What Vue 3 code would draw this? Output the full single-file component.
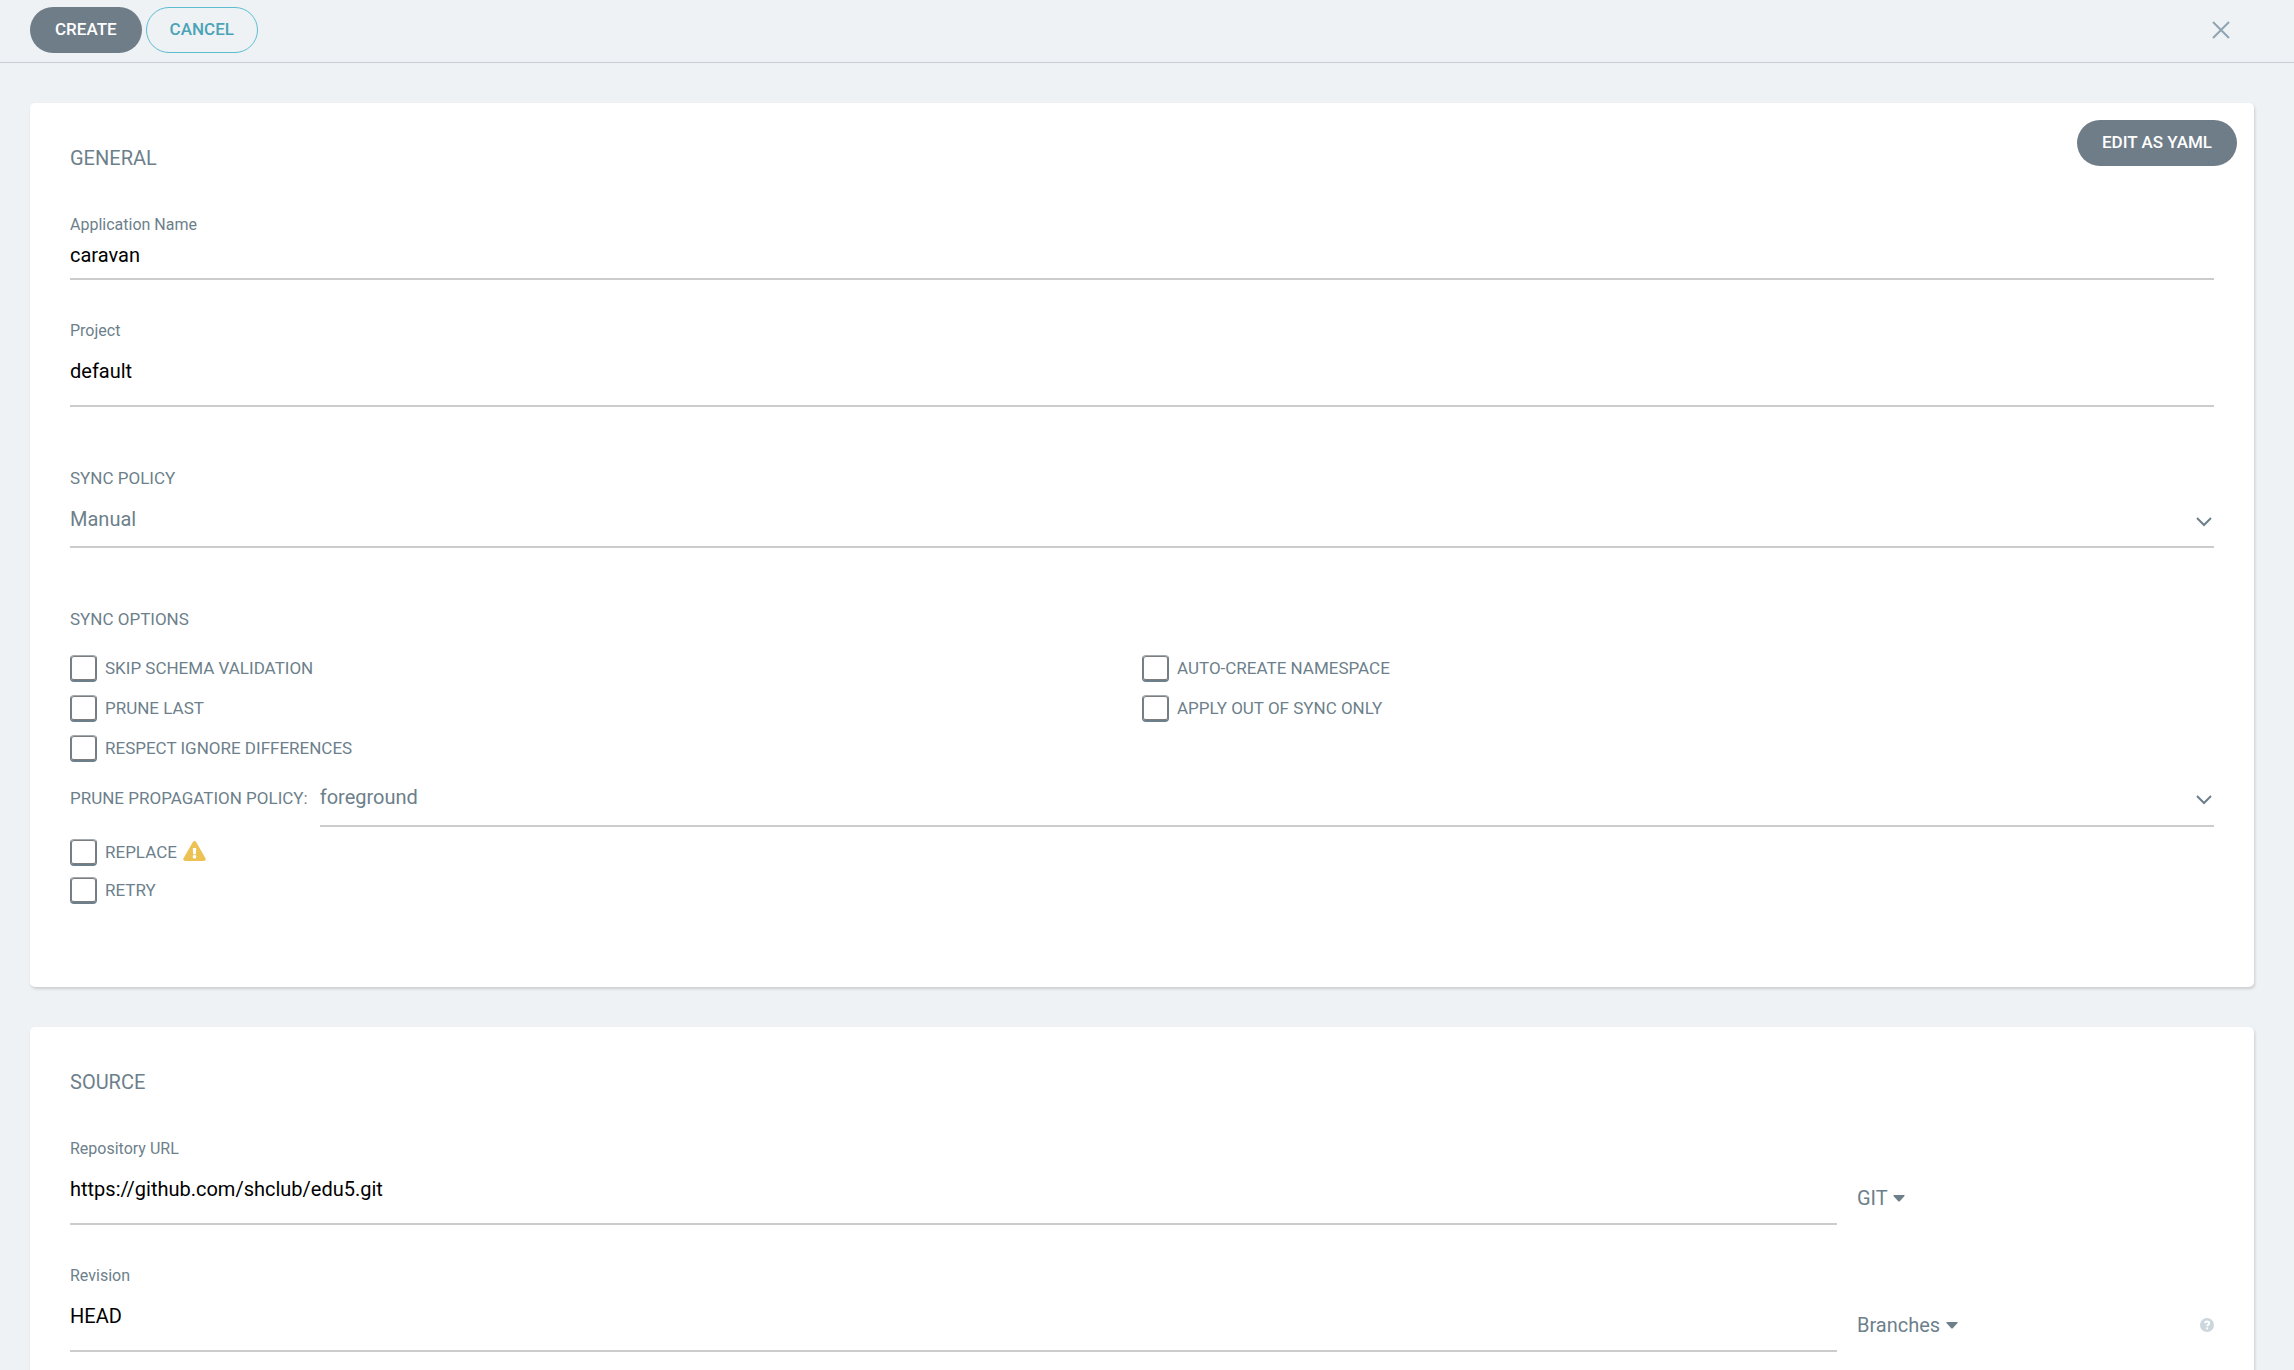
<script setup>
import { ref } from 'vue'

const leftOptions = [
  { id: 'skip-schema', label: 'Skip schema validation' },
  { id: 'prune-last', label: 'Prune last' },
  { id: 'respect-ignore', label: 'Respect ignore differences' }
]
const rightOptions = [
  { id: 'auto-namespace', label: 'Auto-create namespace' },
  { id: 'out-of-sync', label: 'Apply out of sync only' }
]

const appName = ref('caravan')
const project = ref('default')
const repo = ref('https://github.com/shclub/edu5.git')
const revision = ref('HEAD')
</script>

<template>
  <div class="page">
    <header class="topbar">
      <button type="button" class="btn btn-base">CREATE</button>
      <button type="button" class="btn btn-outline">CANCEL</button>
      <button type="button" class="close" aria-label="Close">
        <svg width="18" height="18" viewBox="0 0 18 18"><path d="M1 1L17 17M17 1L1 17" /></svg>
      </button>
    </header>

    <main class="panels">
      <section class="card">
        <button type="button" class="btn btn-base yaml">EDIT AS YAML</button>
        <h2 class="title">GENERAL</h2>

        <div class="field">
          <label for="app-name">Application Name</label>
          <input id="app-name" v-model="appName" type="text" class="compact" />
        </div>
        <div class="field project">
          <label for="project">Project</label>
          <input id="project" v-model="project" type="text" />
        </div>

        <div class="policy">
          <label class="caption" for="sync-policy">SYNC POLICY</label>
          <div class="picker">
            <select id="sync-policy"><option>Manual</option></select>
            <svg class="chevron" width="16" height="10" viewBox="0 0 16 10"><path d="M1 1L8 8L15 1" /></svg>
          </div>
        </div>

        <h3 class="caption">SYNC OPTIONS</h3>
        <div class="options">
          <div class="column">
            <label v-for="o in leftOptions" :key="o.id" class="check">
              <input :id="o.id" type="checkbox" /><span>{{ o.label }}</span>
            </label>
          </div>
          <div class="column">
            <label v-for="o in rightOptions" :key="o.id" class="check">
              <input :id="o.id" type="checkbox" /><span>{{ o.label }}</span>
            </label>
          </div>
        </div>

        <div class="propagation">
          <label class="caption" for="propagation">PRUNE PROPAGATION POLICY:</label>
          <div class="picker tall">
            <select id="propagation"><option>foreground</option></select>
            <svg class="chevron" width="16" height="10" viewBox="0 0 16 10"><path d="M1 1L8 8L15 1" /></svg>
          </div>
        </div>

        <div class="extras">
          <label class="check">
            <input id="replace" type="checkbox" /><span>Replace</span>
            <svg class="warn" width="23" height="20" viewBox="0 0 576 512"><path d="M569.5 440C588 472 564.800 512 527.900 512H48.100C11.100 512-12 471.900 6.500 440L246.400 24C264.900-8 311.200-8 329.600 24L569.500 440ZM288 354C262.600 354 242 374.600 242 400S262.600 446 288 446 334 425.400 334 400 313.400 354 288 354ZM244.300 188.700L251.700 324.700C252.100 331 257.300 336 263.700 336H312.300C318.700 336 323.900 331 324.300 324.700L331.700 188.700C332 181.800 326.600 176 319.700 176H256.300C249.400 176 244 181.800 244.300 188.700Z" /></svg>
          </label>
          <label class="check">
            <input id="retry" type="checkbox" /><span>Retry</span>
          </label>
        </div>
      </section>

      <section class="card">
        <h2 class="title">SOURCE</h2>
        <div class="row">
          <div class="field">
            <label for="repo">Repository URL</label>
            <input id="repo" v-model="repo" type="text" />
          </div>
          <div class="side">
            <span class="menu">
              <select aria-label="Repository type"><option>GIT</option></select>
              <svg width="12" height="7" viewBox="0 0 12 7"><path d="M1 0H11Q12 0 11.500 1L7 6Q6 7 5 6L0.500 1Q0 0 1 0Z" /></svg>
            </span>
          </div>
        </div>
        <div class="row">
          <div class="field">
            <label for="revision">Revision</label>
            <input id="revision" v-model="revision" type="text" />
          </div>
          <div class="side">
            <span class="menu">
              <select aria-label="Revision type"><option>Branches</option></select>
              <svg width="12" height="7" viewBox="0 0 12 7"><path d="M1 0H11Q12 0 11.500 1L7 6Q6 7 5 6L0.500 1Q0 0 1 0Z" /></svg>
            </span>
            <svg class="help" width="14" height="14" viewBox="0 0 14 14">
              <circle cx="7" cy="7" r="7" />
              <path d="M4.900 5.300Q5.300 3.600 7 3.600Q9.100 3.600 9.100 5.300Q9.100 6.300 8 6.900Q7.200 7.300 7.200 8.200" />
              <circle class="dot" cx="7.100" cy="10.400" r="1.100" />
            </svg>
          </div>
        </div>
      </section>
    </main>
  </div>
</template>

<style>
body {
  margin: 0;
  background: #eef2f5;
}
</style>

<style scoped>
.page {
  height: 100vh;
  overflow: hidden;
  background: #eef2f5;
  color: #6d7f8b;
  font-family: Roboto, "Liberation Sans", sans-serif;
  font-size: 20px;
}
.page *,
.page *::before {
  box-sizing: border-box;
}
button,
input,
select {
  margin: 0;
  font-family: inherit;
}
.topbar {
  display: flex;
  align-items: center;
  gap: 4px;
  height: 63px;
  padding: 0 64px 2px 30px;
  border-bottom: 1px solid #c7cdd2;
}
.btn {
  height: 46px;
  padding: 0 25px 3px;
  border: 0;
  border-radius: 23px;
  font-size: 17px;
  font-weight: 500;
  line-height: 20px;
  white-space: nowrap;
}
.btn-base {
  background: #6f7d88;
  color: #fff;
}
.btn-outline {
  padding: 0 23px 3px;
  border: 1px solid #5dbdd0;
  background: transparent;
  color: #4ba3b5;
}
.close {
  display: flex;
  margin-left: auto;
  padding: 0;
  border: 0;
  background: none;
}
.close path {
  fill: none;
  stroke: #8fa4b1;
  stroke-width: 2;
}
.panels {
  display: flex;
  flex-direction: column;
  gap: 40px;
  padding: 40px 40px 40px 30px;
}
.card {
  position: relative;
  padding: 40px 40px 78px;
  border-radius: 5px;
  background: #fff;
  box-shadow: 1px 2px 3px rgba(0, 0, 0, 0.15);
}
.yaml {
  position: absolute;
  top: 17px;
  right: 17px;
}
.title {
  margin: 0 0 40px;
  font-size: 20px;
  font-weight: 400;
  line-height: 30px;
}
.field label {
  display: block;
  font-size: 16px;
  line-height: 24px;
}
.field input {
  display: block;
  width: 100%;
  height: 64px;
  padding: 0 0 6px;
  border: 0;
  border-bottom: 2px solid #ccc;
  background: none;
  color: #000;
  font-size: 20px;
}
.field .compact {
  height: 43px;
  padding: 0 0 6px;
}
.project {
  padding-top: 39px;
}
.policy {
  padding: 59px 0;
}
.caption {
  display: block;
  margin: 0;
  font-size: 17px;
  font-weight: 400;
  line-height: 24px;
  white-space: nowrap;
}
.picker {
  position: relative;
  flex: 1;
  height: 54px;
  margin-top: 4px;
  border-bottom: 2px solid #ccc;
}
select {
  display: block;
  padding: 0;
  border: 0;
  background: none;
  color: inherit;
  font-size: 20px;
  appearance: none;
}
.picker select {
  width: 100%;
  height: 50px;
}
.chevron {
  position: absolute;
  right: 2px;
  top: 23px;
  fill: none;
  stroke: #6d7f8b;
  stroke-width: 2;
}
.options {
  display: grid;
  grid-template-columns: 1fr 1fr;
  padding-top: 17px;
}
.check {
  display: flex;
  align-items: center;
  height: 40px;
  font-size: 17px;
  text-transform: uppercase;
}
.check input {
  width: 27px;
  height: 27px;
  margin-right: 8px;
  border: 1px solid #6d7f8b;
  border-top-color: #a3a9ad;
  border-bottom-width: 2px;
  border-radius: 4px;
  box-shadow: inset 0 0 0 1px #7b7d7f;
  appearance: none;
}
.extras {
  padding-top: 6px;
}
.extras .check {
  height: 38px;
}
.warn {
  margin: 0 0 3px 6px;
  fill: #ecc254;
}
.propagation {
  display: flex;
  align-items: center;
  gap: 12px;
}
.tall {
  height: 55px;
}
.row {
  display: grid;
  grid-template-columns: 1fr 357px;
  gap: 20px;
  padding-bottom: 39px;
}
.side {
  display: flex;
  align-items: center;
  justify-content: space-between;
  padding-top: 34px;
}
.menu {
  display: flex;
  align-items: center;
  gap: 5px;
}
.menu svg {
  fill: #6d7f8b;
}
.help {
  fill: #ccd6dd;
}
.help path {
  fill: none;
  stroke: #fff;
  stroke-width: 2;
}
.help .dot {
  fill: #fff;
}
</style>
